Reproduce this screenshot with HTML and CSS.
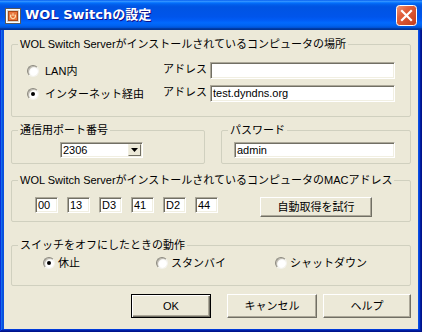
FILE: index.html
```html
<!DOCTYPE html>
<html lang="ja">
<head>
<meta charset="utf-8">
<title>WOL Switchの設定</title>
<link rel="stylesheet" href="styles.css">
</head>
<body>
<div class="window">
  <div class="titlebar">
    <svg class="app-icon" width="16" height="16" viewBox="0 0 16 16">
      <rect x="0.5" y="0.5" width="15" height="15" fill="#d8d4cc" stroke="#5a5a5a"/>
      <rect x="1.5" y="1.5" width="13" height="13" fill="none" stroke="#ffffff"/>
      <rect x="3.5" y="3.5" width="9" height="9" fill="#e8743c" stroke="#a84818"/>
      <path d="M6.2 6.6 A2.4 2.4 0 1 0 9.8 6.6" fill="none" stroke="#ffe0b0" stroke-width="1.1"/>
      <path d="M8 5.2 V8" stroke="#ffe0b0" stroke-width="1.1"/>
    </svg>
    <span class="title">WOL Switchの設定</span>
    <span class="close-btn">
      <svg width="21" height="21" viewBox="0 0 21 21">
        <defs>
          <linearGradient id="cg" x1="0" y1="0" x2="1" y2="1">
            <stop offset="0" stop-color="#f09878"/>
            <stop offset="0.35" stop-color="#e2603c"/>
            <stop offset="1" stop-color="#c23c1a"/>
          </linearGradient>
        </defs>
        <rect x="0.5" y="0.5" width="20" height="20" rx="3" fill="url(#cg)" stroke="#ffffff"/>
        <path d="M6 6 L15 15 M15 6 L6 15" stroke="#ffffff" stroke-width="2.2" stroke-linecap="square"/>
      </svg>
    </span>
  </div>
  <div class="client">
    <div class="group g-loc">
      <div class="legend">WOL Switch Serverがインストールされているコンピュータの場所</div>
      <div class="loc-grid">
        <div class="radio-item"><span class="radio"></span><span>LAN内</span></div>
        <span class="addr">アドレス</span>
        <span class="edit"></span>
        <div class="radio-item"><span class="radio on"></span><span>インターネット経由</span></div>
        <span class="addr">アドレス</span>
        <span class="edit">test.dyndns.org</span>
      </div>
    </div>
    <div class="row2">
      <div class="group g-port">
        <div class="legend">通信用ポート番号</div>
        <div class="combo">
          <span class="combo-text">2306</span>
          <span class="combo-btn">
            <svg width="7" height="4" viewBox="0 0 7 4"><path d="M0 0 H7 L3.5 4 Z" fill="#000"/></svg>
          </span>
        </div>
      </div>
      <div class="group g-pass">
        <div class="legend">パスワード</div>
        <span class="edit pass">admin</span>
      </div>
    </div>
    <div class="group g-mac">
      <div class="legend">WOL Switch ServerがインストールされているコンピュータのMACアドレス</div>
      <div class="mac-row">
        <span class="edit mac">00</span>
        <span class="edit mac">13</span>
        <span class="edit mac">D3</span>
        <span class="edit mac">41</span>
        <span class="edit mac">D2</span>
        <span class="edit mac">44</span>
        <span class="btn auto">自動取得を試行</span>
      </div>
    </div>
    <div class="group g-act">
      <div class="legend">スイッチをオフにしたときの動作</div>
      <div class="act-row">
        <div class="radio-item tight w1"><span class="radio on"></span><span>休止</span></div>
        <div class="radio-item tight w2"><span class="radio"></span><span>スタンバイ</span></div>
        <div class="radio-item tight"><span class="radio"></span><span>シャットダウン</span></div>
      </div>
    </div>
    <div class="buttons">
      <span class="btn default ok">OK</span>
      <span class="btn cancel">キャンセル</span>
      <span class="btn help">ヘルプ</span>
    </div>
  </div>
</div>
</body>
</html>
```
FILE: styles.css
```css
* { box-sizing: border-box; }
html, body { margin: 0; padding: 0; }
body {
  width: 422px;
  height: 332px;
  overflow: hidden;
  font-family: "Liberation Sans", "Noto Sans CJK JP", sans-serif;
  font-size: 11px;
  color: #000;
}
.window {
  width: 422px;
  height: 332px;
  display: flex;
  flex-direction: column;
  background: #0a4fe0;
  box-shadow: inset -1px -1px #00138c, inset 1px 1px #0831d9, inset -2px -2px #001ea0, inset 2px 2px #166aee, inset -3px -3px #003bda, inset 3px 3px #0855dd;
}
.titlebar {
  height: 30px;
  flex: none;
  display: flex;
  align-items: center;
  padding: 0 5px 0 5px;
  background: linear-gradient(180deg, #0058ee 0%, #3593ff 4%, #288eff 6%, #127dff 8%, #036ffc 10%, #0262ee 14%, #0057e5 20%, #0054e3 24%, #0055eb 56%, #005bf5 66%, #026afe 76%, #0062ef 86%, #0052d6 92%, #0040ab 94%, #003092 100%);
}
.app-icon { flex: none; margin-top: 1px; }
.title {
  margin-left: 4px;
  color: #fff;
  font-family: "DejaVu Sans", "Noto Sans CJK JP", sans-serif;
  font-weight: bold;
  font-size: 13px;
  line-height: 16px;
  text-shadow: 1px 1px #0f1089;
  flex: 1;
}
.close-btn { flex: none; width: 21px; height: 21px; display: block; }
.close-btn svg { display: block; }
.client {
  flex: 1;
  margin: 0 4px 3px 4px;
  background: #ece9d8;
  padding: 14px 7px 0 7px;
  display: flex;
  flex-direction: column;
}
.group {
  border: 1px solid #d0d0bf;
  border-radius: 2px;
  display: flex;
  flex-direction: column;
}
.legend {
  align-self: flex-start;
  margin: -8px 0 0 6px;
  padding: 0 2px;
  height: 14px;
  line-height: 14px;
  background: #ece9d8;
  white-space: nowrap;
}
.g-loc { width: 400px; }
.loc-grid {
  display: grid;
  grid-template-columns: 136px 47px 185px;
  grid-auto-rows: 17px;
  row-gap: 6px;
  margin: 11px 15px 14px 15px;
  align-items: center;
}
.radio-item {
  display: flex;
  align-items: center;
  gap: 6px;
  line-height: 14px;
  white-space: nowrap;
}
.radio-item.tight { gap: 3px; }
.radio {
  flex: none;
  width: 12px;
  height: 12px;
  border-radius: 50%;
  border: 1px solid;
  border-color: #8c8a80 #f4f3ee #f4f3ee #8c8a80;
  background: radial-gradient(circle at 60% 60%, #ffffff 40%, #e4e2d8 80%);
  box-shadow: inset 1px 1px 0 #bdbab0;
  display: flex;
  align-items: center;
  justify-content: center;
}
.radio.on::after {
  content: "";
  width: 4px;
  height: 4px;
  border-radius: 50%;
  background: #000;
}
.addr { line-height: 14px; white-space: nowrap; align-self: start; }
.edit {
  display: block;
  height: 17px;
  background: #fff;
  border: 1px solid;
  border-color: #aca899 #ffffff #ffffff #aca899;
  box-shadow: inset 1px 1px #716f64, inset -1px -1px #f1efe2;
  padding: 0 2px;
  line-height: 15px;
  white-space: nowrap;
  overflow: hidden;
}
.row2 {
  display: flex;
  gap: 16px;
  margin-top: 13px;
}
.g-port { width: 194px; }
.g-pass { width: 190px; }
.combo {
  margin: 5px 0 5px 48px;
  width: 83px;
  height: 16px;
  background: #fff;
  border: 1px solid;
  border-color: #aca899 #ffffff #ffffff #aca899;
  box-shadow: inset 1px 1px #716f64, inset -1px -1px #f1efe2;
  display: flex;
  align-items: stretch;
  padding: 1px 1px 1px 2px;
}
.combo-text { flex: 1; line-height: 12px; }
.combo-btn {
  width: 13px;
  flex: none;
  background: #ece9d8;
  border: 1px solid;
  border-color: #f1efe2 #716f64 #716f64 #f1efe2;
  display: flex;
  align-items: center;
  justify-content: center;
}
.combo-btn svg { display: block; }
.edit.pass {
  margin: 5px 0 5px 12px;
  width: 161px;
  height: 16px;
  line-height: 14px;
}
.g-mac { width: 400px; margin-top: 16px; }
.mac-row {
  display: flex;
  align-items: flex-start;
  gap: 9px;
  margin: 10px 0 4px 23px;
  height: 20px;
}
.edit.mac { width: 23px; height: 16px; line-height: 14px; }
.btn {
  display: flex;
  align-items: center;
  justify-content: center;
  background: #ece9d8;
  border: 1px solid;
  border-color: #ffffff #716f64 #716f64 #ffffff;
  box-shadow: inset -1px -1px #aca899;
  white-space: nowrap;
  line-height: 14px;
}
.btn.auto { width: 112px; height: 20px; margin-left: 33px; }
.g-act { width: 400px; margin-top: 23px; }
.act-row {
  display: flex;
  align-items: center;
  height: 14px;
  margin: 4px 0 15px 31px;
}
.w1 { width: 113px; }
.w2 { width: 119px; }
.buttons {
  display: flex;
  justify-content: flex-end;
  margin-top: 8px;
}
.buttons .btn { height: 24px; }
.btn.default {
  border: 1px solid #000;
  box-shadow: inset 1px 1px #ffffff, inset -1px -1px #716f64, inset -2px -2px #aca899;
}
.ok { width: 80px; }
.cancel { width: 90px; margin-left: 16px; }
.help { width: 88px; margin-left: 6px; }
```
